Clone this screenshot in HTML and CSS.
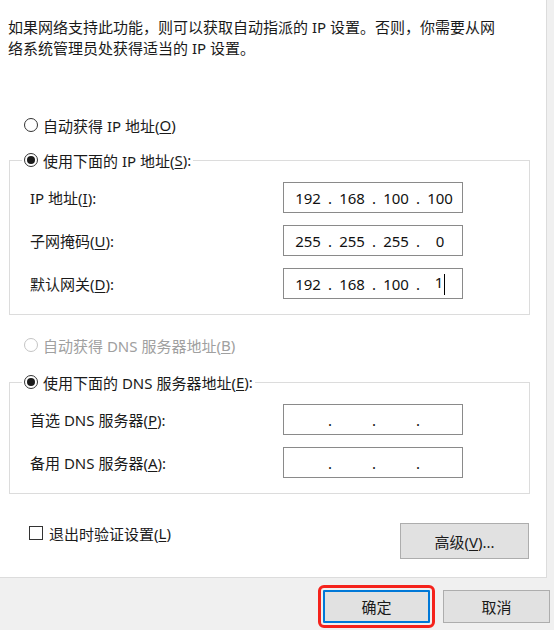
FILE: index.html
```html
<!DOCTYPE html>
<html lang="zh-CN">

<head>
    <meta charset="UTF-8">
    <meta name="viewport" content="width=device-width, initial-scale=1.0">
    <title>Internet 协议版本 4 (TCP/IPv4) 属性</title>
    <link rel="stylesheet" href="styles.css">
</head>

<body>
    <div class="dialog">
        <div class="panel">
            <p class="intro">如果网络支持此功能，则可以获取自动指派的 IP 设置。否则，你需要从网络系统管理员处获得适当的 IP 设置。</p>

            <div class="radio first"><span class="ring"></span>自动获得 IP 地址(<u>O</u>)</div>

            <fieldset class="group group-ip">
                <legend>
                    <div class="radio checked"><span class="ring"></span>使用下面的 IP 地址(<u>S</u>):</div>
                </legend>
                <div class="row">
                    <span class="lbl">IP 地址(<u>I</u>):</span>
                    <div class="ipbox">
                        <span class="oct">192</span><span class="sep">.</span><span class="oct">168</span><span class="sep">.</span><span class="oct">100</span><span class="sep">.</span><span class="oct">100</span>
                    </div>
                </div>
                <div class="row">
                    <span class="lbl">子网掩码(<u>U</u>):</span>
                    <div class="ipbox">
                        <span class="oct">255</span><span class="sep">.</span><span class="oct">255</span><span class="sep">.</span><span class="oct">255</span><span class="sep">.</span><span class="oct">0</span>
                    </div>
                </div>
                <div class="row">
                    <span class="lbl">默认网关(<u>D</u>):</span>
                    <div class="ipbox">
                        <span class="oct">192</span><span class="sep">.</span><span class="oct">168</span><span class="sep">.</span><span class="oct">100</span><span class="sep">.</span><span class="oct">1<span class="caret"></span></span>
                    </div>
                </div>
            </fieldset>

            <div class="radio disabled"><span class="ring"></span>自动获得 DNS 服务器地址(<u>B</u>)</div>

            <fieldset class="group group-dns">
                <legend>
                    <div class="radio checked"><span class="ring"></span>使用下面的 DNS 服务器地址(<u>E</u>):</div>
                </legend>
                <div class="row">
                    <span class="lbl">首选 DNS 服务器(<u>P</u>):</span>
                    <div class="ipbox">
                        <span class="oct"></span><span class="sep">.</span><span class="oct"></span><span class="sep">.</span><span class="oct"></span><span class="sep">.</span><span class="oct"></span>
                    </div>
                </div>
                <div class="row">
                    <span class="lbl">备用 DNS 服务器(<u>A</u>):</span>
                    <div class="ipbox">
                        <span class="oct"></span><span class="sep">.</span><span class="oct"></span><span class="sep">.</span><span class="oct"></span><span class="sep">.</span><span class="oct"></span>
                    </div>
                </div>
            </fieldset>

            <div class="footer">
                <div class="check"><span class="box"></span>退出时验证设置(<u>L</u>)</div>
                <button class="btn btn-adv">高级(<u>V</u>)...</button>
            </div>
        </div>

        <div class="bar">
            <button class="btn btn-ok">确定</button>
            <button class="btn btn-cancel">取消</button>
        </div>
    </div>
</body>

</html>
```

FILE: styles.css
```css
body {
    margin: 0;
    background: #f0f0f0;
    font-family: "Noto Sans", "Noto Sans CJK SC", sans-serif;
    font-size: 15px;
    color: #1a1a1a;
}

u {
    text-decoration-thickness: 1px;
    text-underline-offset: 2px;
}

.dialog {
    width: 554px;
    height: 630px;
    overflow: hidden;
    background: #f0f0f0;
}

.panel {
    width: 546px;
    height: 577px;
    background: #fff;
    border-right: 1px solid #dcdcdc;
    border-bottom: 1px solid #dcdcdc;
}

.intro {
    margin: 0;
    padding: 17px 40px 0 8px;
    line-height: 21px;
}

/* radio buttons */
.radio {
    display: flex;
    align-items: center;
    height: 20px;
    white-space: nowrap;
}

.radio .ring {
    width: 14px;
    height: 14px;
    box-sizing: border-box;
    border: 1px solid #333;
    border-radius: 50%;
    margin-right: 5px;
    display: flex;
    align-items: center;
    justify-content: center;
    background: #fff;
}

.radio.checked .ring::after {
    content: "";
    width: 8px;
    height: 8px;
    border-radius: 50%;
    background: #1a1a1a;
}

.radio.first {
    margin-top: 56px;
    padding-left: 24px;
}

.radio.disabled {
    margin-top: 20px;
    padding-left: 24px;
    color: #a0a0a0;
}

.radio.disabled .ring {
    border-color: #c4c4c4;
}

/* group boxes */
.group {
    width: 521px;
    box-sizing: border-box;
    min-inline-size: 0;
    margin: 0 0 0 9px;
    border: 1px solid #dcdcdc;
    padding: 13px 0 13px 20px;
    display: flex;
    flex-direction: column;
    gap: 12px;
}

.group legend {
    margin-left: -8px;
    padding: 0 2px;
}

.group-ip {
    margin-top: 15px;
    padding-top: 12px;
    padding-bottom: 15px;
}

.group-dns {
    margin-top: 17px;
    padding-top: 12px;
    padding-bottom: 15px;
}

.row {
    display: grid;
    grid-template-columns: 253px 180px;
    align-items: center;
    height: 31px;
}

.ipbox {
    height: 31px;
    box-sizing: border-box;
    border: 1px solid #8a8a8a;
    padding-left: 7px;
    display: flex;
    align-items: center;
    color: #111;
}

.oct {
    width: 34px;
    text-align: center;
}

.sep {
    width: 10px;
    text-align: center;
}

.caret {
    display: inline-block;
    width: 1px;
    height: 21px;
    margin-left: 1px;
    background: #000;
    vertical-align: middle;
}

/* bottom of panel */
.footer {
    margin-top: 29px;
    padding: 0 17px 0 29px;
    display: flex;
    justify-content: space-between;
    align-items: flex-start;
}

.check {
    display: flex;
    align-items: center;
    height: 22px;
    margin-top: -1px;
}

.check .box {
    width: 14px;
    height: 14px;
    box-sizing: border-box;
    border: 1px solid #333;
    margin-right: 6px;
}

.btn {
    font-family: inherit;
    font-size: 15px;
    color: #1a1a1a;
    background: #e1e1e1;
    border: 1px solid #adadad;
    border-radius: 0;
    padding: 0;
}

.btn-adv {
    width: 129px;
    height: 36px;
}

.bar {
    display: flex;
    justify-content: flex-end;
    gap: 13px;
    padding: 12px 4px 0 0;
}

.btn-ok,
.btn-cancel {
    width: 107px;
    height: 33px;
}

.btn-ok {
    border: 2px solid #0078d7;
    outline: 3px solid #f5221b;
    outline-offset: 2px;
    border-radius: 1px;
}
```
